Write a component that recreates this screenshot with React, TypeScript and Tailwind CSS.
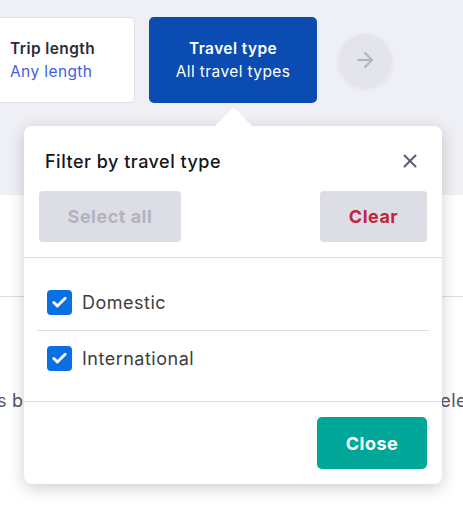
import React from 'react';
import { ArrowRight, X, Check } from 'lucide-react';

const font = { fontFamily: 'Inter, "Noto Sans", sans-serif' };

const options = ['Domestic', 'International'];

export default function App() {
  return (
    <div className="relative w-[463px] h-[506px] overflow-hidden bg-white" style={font}>
      {/* Filter chips strip */}
      <div className="h-[195px] bg-[#eff0f5] pt-[17px]">
        <div className="flex items-start -ml-[30px]">
          <div className="w-[165px] h-[86px] bg-white rounded-[5px] border border-[#dfe0e8] flex flex-col justify-center pl-[39px] tracking-[0.4px]">
            <div className="text-[15.5px] font-semibold text-[#2c2c3c] leading-[23px]">Trip length</div>
            <div className="text-[15.5px] text-[#3f5fe0] leading-[23px]">Any length</div>
          </div>
          <div className="ml-[14px] w-[168px] h-[86px] bg-[#0a4cb1] rounded-[5px] flex flex-col items-center justify-center text-white tracking-[0.4px]">
            <div className="text-[15.5px] font-semibold leading-[23px]">Travel type</div>
            <div className="text-[15.5px] leading-[23px]">All travel types</div>
          </div>
          <div className="ml-[22px] mt-[17px] w-[52px] h-[52px] rounded-full bg-[#e4e4eb] shadow-[0_2px_6px_rgba(0,0,0,0.08)] flex items-center justify-center">
            <ArrowRight className="w-6 h-6 text-[#b3b3c0]" strokeWidth={2} />
          </div>
        </div>
      </div>

      {/* Results area behind the popover */}
      <div className="h-[102px] border-b border-[#dcdce3]" />
      <div className="pt-[90px] flex whitespace-nowrap text-[18px] tracking-[0.5px] text-[#545468]">
        <span className="w-[7px] flex justify-end">Showing prices</span>
        <span className="ml-[5px]">based on the trip lengths and travel types you selected</span>
      </div>

      {/* Popover */}
      <div className="absolute left-[24px] top-[126px] w-[418px] bg-white rounded-[8px] shadow-[0_4px_16px_rgba(37,32,31,0.22)]">
        <div className="absolute left-[196px] -top-[13px] w-[27px] h-[27px] bg-white rotate-45 rounded-[2px]" />
        <div className="relative px-[15px] pt-[24px] pb-[15px]">
          <div className="flex items-center justify-between pl-[6px] pr-[6px] h-[22px]">
            <h3 className="text-[18px] tracking-[0.5px] font-medium text-[#161616]">Filter by travel type</h3>
            <X className="w-[22px] h-[22px] text-[#5c5c70]" strokeWidth={2.2} />
          </div>
          <div className="flex justify-between mt-[19px]">
            <button className="w-[142px] h-[51px] rounded-[4px] bg-[#dddde5] text-[18px] tracking-[0.5px] font-bold text-[#b3b3c0]">
              Select all
            </button>
            <button className="w-[107px] h-[51px] rounded-[4px] bg-[#dddde5] text-[18px] tracking-[0.5px] font-bold text-[#c3253d]">
              Clear
            </button>
          </div>
        </div>

        <div className="border-t border-[#dcdce3] px-[13px] pt-[16px] pb-[15px]">
          {options.map((label, i) => (
            <div
              key={label}
              className={`h-[56px] flex items-center pl-[10px] gap-[10px] ${i > 0 ? 'border-t border-[#dcdce3]' : ''}`}
            >
              <div className="w-[25px] h-[25px] rounded-[4px] bg-[#0b6fe4] flex items-center justify-center">
                <Check className="w-[17px] h-[17px] text-white" strokeWidth={4} />
              </div>
              <span className="text-[18px] tracking-[0.5px] text-[#3d3d3d]">{label}</span>
            </div>
          ))}
        </div>

        <div className="border-t border-[#dcdce3] px-[15px] pt-[15px] pb-[15px] flex justify-end">
          <button className="w-[110px] h-[52px] rounded-[5px] bg-[#00a698] text-white text-[18px] tracking-[0.5px] font-bold">
            Close
          </button>
        </div>
      </div>
    </div>
  );
}
